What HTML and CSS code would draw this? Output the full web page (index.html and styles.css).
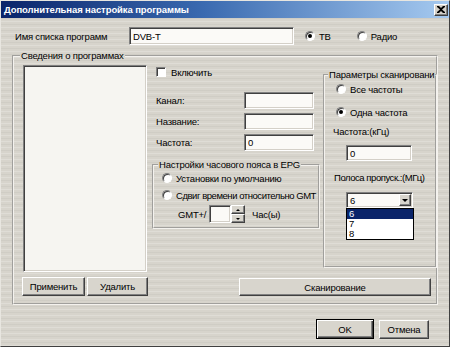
FILE: index.html
```html
<!DOCTYPE html>
<html lang="ru">
<head>
<meta charset="utf-8">
<title>Дополнительная настройка программы</title>
<link rel="stylesheet" href="styles.css">
</head>
<body>
<div class="window">
  <div class="titlebar">
    <span class="title">Дополнительная настройка программы</span>
    <span class="close"><svg width="8" height="7" viewBox="0 0 8 7"><path d="M0 0h2l2 2 2-2h2v1L5 3.5 8 6v1H6L4 5 2 7H0V6l3-2.5L0 1z" fill="#000"/></svg></span>
  </div>
  <div class="body">
    <div class="name-row">
      <span class="name-label">Имя списка программ</span>
      <div class="field name-field">DVB-T</div>
      <span class="radio on tv-radio"></span><span class="rlabel">ТВ</span>
      <span class="radio radio-radio"></span><span class="rlabel">Радио</span>
    </div>

    <fieldset class="group main-group">
      <legend class="main-legend">Сведения о программах</legend>
      <div class="main-inner">
        <div class="left-col">
          <div class="listbox"></div>
          <div class="btn-row">
            <button class="btn apply-btn">Применить</button>
            <button class="btn delete-btn">Удалить</button>
          </div>
        </div>
        <div class="right-part">
          <div class="columns">
            <div class="mid-col">
              <div class="check-row"><span class="checkbox"></span><span class="rlabel">Включить</span></div>
              <div class="form-row first-row"><span class="flabel">Канал:</span><div class="field small-field"></div></div>
              <div class="form-row"><span class="flabel">Название:</span><div class="field small-field"></div></div>
              <div class="form-row"><span class="flabel">Частота:</span><div class="field small-field">0</div></div>
              <fieldset class="group epg-group">
                <legend class="epg-legend">Настройки часового пояса в EPG</legend>
                <div class="opt-row"><span class="radio"></span><span class="rlabel">Установки по умолчанию</span></div>
                <div class="opt-row opt-second"><span class="radio"></span><span class="rlabel tight">Сдвиг времени относительно GMT</span></div>
                <div class="gmt-row">
                  <span class="gmt-label">GMT+/</span>
                  <div class="field spin-field"></div>
                  <div class="spin-btns">
                    <span class="spin-btn"><span class="tri-up"></span></span>
                    <span class="spin-btn"><span class="tri-down"></span></span>
                  </div>
                  <span class="hours-label">Час(ы)</span>
                </div>
              </fieldset>
            </div>
            <fieldset class="group scan-group">
              <legend class="scan-legend">Параметры сканировани</legend>
              <div class="opt-row scan-opt"><span class="radio"></span><span class="rlabel">Все частоты</span></div>
              <div class="opt-row scan-opt scan-opt2"><span class="radio on"></span><span class="rlabel">Одна частота</span></div>
              <div class="scan-label freq-label">Частота:(кГц)</div>
              <div class="field scan-field">0</div>
              <div class="scan-label band-label tight">Полоса пропуск.:(МГц)</div>
              <div class="select-wrap">
                <div class="field select-field"><span class="select-value">6</span><span class="drop-btn"><span class="tri-down"></span></span></div>
                <ul class="drop-list">
                  <li class="sel">6</li>
                  <li>7</li>
                  <li>8</li>
                </ul>
              </div>
            </fieldset>
          </div>
          <button class="btn scan-btn">Сканирование</button>
        </div>
      </div>
    </fieldset>

    <div class="footer">
      <button class="btn ok-btn">OK</button>
      <button class="btn cancel-btn">Отмена</button>
    </div>
  </div>
</div>
</body>
</html>
```

FILE: styles.css
```css
* { box-sizing: border-box; }

html, body {
  margin: 0;
  padding: 0;
  background: #d6d3cb;
}

body {
  font-family: "Liberation Sans", Arial, sans-serif;
  font-size: 9.5px;
  letter-spacing: -0.2px;
  color: #000;
}

.window {
  width: 450px;
  height: 347px;
  border: 1px solid;
  border-color: #e8e6e0 #404040 #404040 #e8e6e0;
  background-color: #d7d4cc;
  background-image: repeating-linear-gradient(180deg,
    rgba(255,255,255,0) 0px, rgba(255,255,255,0) 2px,
    rgba(255,255,255,0.2) 2px, rgba(255,255,255,0.2) 3px,
    rgba(0,0,0,0) 3px, rgba(0,0,0,0) 5px,
    rgba(0,0,0,0.035) 5px, rgba(0,0,0,0.035) 6px);
  overflow: hidden;
}

.titlebar {
  height: 17px;
  display: flex;
  align-items: center;
  justify-content: space-between;
  padding: 0 1px 0 3px;
  background: linear-gradient(90deg, #0a246a 0%, #3a6ab0 45%, #a6caf0 100%);
}

.title {
  color: #fff;
  font-weight: bold;
  font-size: 9.5px;
  letter-spacing: -0.1px;
}

.close {
  width: 14px;
  height: 12px;
  display: flex;
  align-items: center;
  justify-content: center;
  background: #d4d0c8;
  border: 1px solid;
  border-color: #fff #404040 #404040 #fff;
  box-shadow: inset -1px -1px #808080;
}

.body {
  padding: 0 0 0 11px;
}

.tight { letter-spacing: -0.45px; }

/* ---------- top row ---------- */
.name-row {
  display: flex;
  align-items: center;
  height: 18px;
  margin-top: 9px;
  padding-left: 3px;
}

.name-label { width: 114px; }

.field {
  background: #fbfaf7;
  border: 1px solid;
  border-color: #808080 #fff #fff #808080;
  box-shadow: inset 1px 1px #404040, inset -1px -1px #d4d0c8;
  padding: 0 3px;
  display: flex;
  align-items: center;
}

.name-field {
  width: 165px;
  height: 18px;
}

.radio {
  position: relative;
  flex: none;
  width: 10px;
  height: 10px;
  border-radius: 50%;
  background: #fff;
  border: 1px solid;
  border-color: #808080 #fff #fff #808080;
  box-shadow: inset 1px 1px #404040;
}

.radio.on::after {
  content: "";
  position: absolute;
  left: 2px;
  top: 2px;
  width: 4px;
  height: 4px;
  border-radius: 50%;
  background: #000;
}

.rlabel { margin-left: 4px; white-space: nowrap; }

.tv-radio { margin-left: 11px; }
.radio-radio { margin-left: 26px; }

/* ---------- group boxes ---------- */
.group {
  margin: 0;
  min-width: 0;
  border: 2px groove #f4f2ee;
}

.group legend {
  padding: 0 1px;
  line-height: 12px;
  white-space: nowrap;
}

.main-group {
  width: 426px;
  margin-top: 5px;
  padding: 3px 1px 7px 8px;
}

.main-legend { margin-left: -2px; }

.main-inner { display: flex; }

.left-col {
  width: 126px;
  display: flex;
  flex-direction: column;
}

.listbox {
  margin-left: 1px;
  width: 124px;
  height: 207px;
  background: #f6f5f1;
  border: 1px solid;
  border-color: #808080 #fff #fff #808080;
  box-shadow: inset 1px 1px #404040, inset -1px -1px #d4d0c8;
}

.btn-row {
  display: flex;
  gap: 2px;
  margin-top: 5px;
}

.btn {
  font-family: "Liberation Sans", Arial, sans-serif;
  font-size: 9.5px;
  letter-spacing: -0.2px;
  color: #000;
  background: #d8d5cd;
  border: 1px solid;
  border-color: #fff #404040 #404040 #fff;
  box-shadow: inset -1px -1px #808080;
  padding: 0;
  height: 19px;
}

.apply-btn { width: 63px; }
.delete-btn { width: 61px; }

.right-part {
  margin-left: 4px;
  display: flex;
  flex-direction: column;
}

.columns {
  display: flex;
  align-items: flex-start;
}

.mid-col {
  width: 168px;
  display: flex;
  flex-direction: column;
}

.check-row {
  display: flex;
  align-items: center;
  height: 12px;
  margin-top: 1px;
  padding-left: 4px;
}

.checkbox {
  width: 10px;
  height: 10px;
  background: #fff;
  border: 1px solid;
  border-color: #808080 #fff #fff #808080;
  box-shadow: inset 1px 1px #404040;
}

.check-row .rlabel { margin-left: 5px; }

.form-row {
  display: flex;
  align-items: center;
  justify-content: space-between;
  height: 17px;
  margin-top: 4px;
  padding: 0 6px 0 4px;
}

.form-row.first-row { margin-top: 14px; }

.small-field {
  width: 70px;
  height: 17px;
}

.epg-group {
  width: 168px;
  margin-top: 8px;
  padding: 1px 4px 4px 8px;
}

.epg-legend { margin-left: -4px; }

.opt-row {
  display: flex;
  align-items: center;
  height: 12px;
}

.opt-second { margin-top: 5px; }

.gmt-row {
  display: flex;
  align-items: center;
  height: 18px;
  margin-top: 4px;
  padding-left: 16px;
}

.gmt-label { width: 31px; }

.spin-field {
  width: 22px;
  height: 18px;
}

.spin-btns {
  display: flex;
  flex-direction: column;
  width: 14px;
  height: 18px;
}

.spin-btn {
  flex: 1;
  display: flex;
  align-items: center;
  justify-content: center;
  background: #d8d5cd;
  border: 1px solid;
  border-color: #fff #404040 #404040 #fff;
  box-shadow: inset -1px -1px #808080;
}

.tri-up {
  width: 0;
  height: 0;
  border-left: 2px solid transparent;
  border-right: 2px solid transparent;
  border-bottom: 2px solid #000;
}

.tri-down {
  width: 0;
  height: 0;
  border-left: 2px solid transparent;
  border-right: 2px solid transparent;
  border-top: 2px solid #000;
}

.hours-label { margin-left: 7px; }

/* ---------- scan group ---------- */
.scan-group {
  width: 114px;
  height: 199px;
  margin-top: 4px;
  margin-left: 3px;
  padding: 2px 2px 0 8px;
}

.scan-legend {
  margin-left: -5px;
}

.scan-opt { padding-left: 3px; }
.scan-opt2 { margin-top: 11px; }

.scan-label {
  height: 12px;
  line-height: 12px;
  white-space: nowrap;
}

.freq-label { margin-top: 8px; }
.band-label { margin-top: 11px; padding-left: 1px; }

.scan-field {
  width: 66px;
  height: 16px;
  margin-top: 7px;
  margin-left: 13px;
}

.select-wrap {
  position: relative;
  width: 68px;
  margin-top: 8px;
  margin-left: 13px;
}

.select-field {
  width: 67px;
  height: 16px;
  justify-content: space-between;
  padding: 0 1px 0 3px;
}

.drop-btn {
  width: 12px;
  height: 12px;
  display: flex;
  align-items: center;
  justify-content: center;
  background: #d8d5cd;
  border: 1px solid;
  border-color: #fff #404040 #404040 #fff;
  box-shadow: inset -1px -1px #808080;
}

.drop-btn .tri-down {
  border-left-width: 3px;
  border-right-width: 3px;
  border-top-width: 3px;
}

.drop-list {
  position: absolute;
  left: 0;
  top: 16px;
  width: 68px;
  margin: 0;
  padding: 0;
  list-style: none;
  background: #fff;
  border: 1px solid #000;
}

.drop-list li {
  height: 10px;
  line-height: 10px;
  padding-left: 2px;
}

.drop-list li.sel {
  background: #0a246a;
  color: #fff;
}

.scan-btn {
  width: 192px;
  height: 18px;
  margin-top: 10px;
  margin-left: 87px;
}

/* ---------- footer ---------- */
.footer {
  display: flex;
  justify-content: flex-end;
  align-items: flex-end;
  gap: 5px;
  margin-top: 14px;
  padding-right: 20px;
}

.ok-btn {
  width: 58px;
  height: 20px;
  border: 1px solid #000;
  box-shadow: inset 1px 1px #fff, inset -1px -1px #404040, inset -2px -2px #808080;
}

.cancel-btn {
  width: 50px;
  height: 19px;
}
```
